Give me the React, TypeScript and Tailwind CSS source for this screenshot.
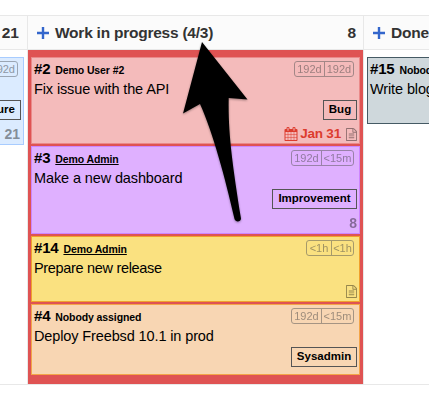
import type { ReactNode } from 'react';

function CalendarIcon() {
  return (
    <svg viewBox="0 0 1792 1792" className="h-[14px] w-[14px] fill-current">
      <path d="M192 1664h288v-288h-288v288zm352 0h320v-288h-320v288zm-352-352h288v-320h-288v320zm352 0h320v-320h-320v320zm-352-384h288v-288h-288v288zm736 736h320v-288h-320v288zm-384-736h320v-288h-320v288zm768 736h288v-288h-288v288zm-384-352h320v-320h-320v320zm-352-864v-288q0-13-9.500-22.500t-22.500-9.500h-64q-13 0-22.500 9.500t-9.500 22.500v288q0 13 9.500 22.500t22.500 9.500h64q13 0 22.500-9.500t9.500-22.500zm736 864h288v-320h-288v320zm-384-384h320v-288h-320v288zm384 0h288v-288h-288v288zm32-480v-288q0-13-9.500-22.500t-22.500-9.500h-64q-13 0-22.500 9.500t-9.500 22.500v288q0 13 9.500 22.500t22.500 9.500h64q13 0 22.500-9.500t9.500-22.500zm384-64v1280q0 52-38 90t-90 38h-1408q-52 0-90-38t-38-90v-1280q0-52 38-90t90-38h128v-96q0-66 47-113t113-47h64q66 0 113 47t47 113v96h384v-96q0-66 47-113t113-47h64q66 0 113 47t47 113v96h128q52 0 90 38t38 90z" />
    </svg>
  );
}

function FileIcon() {
  return (
    <svg viewBox="128 0 1536 1792" className="h-[13px] w-[11px] fill-current opacity-40">
      <path d="M1596 380q28 28 48 76t20 88v1152q0 40-28 68t-68 28h-1344q-40 0-68-28t-28-68v-1600q0-40 28-68t68-28h896q40 0 88 20t76 48zm-444-244v376h376q-10-29-22-41l-313-313q-12-12-41-22zm384 1528v-1024h-416q-40 0-68-28t-28-68v-416h-768v1536h1280zM512 800q0-14 9-23t23-9h704q14 0 23 9t9 23v64q0 14-9 23t-23 9h-704q-14 0-23-9t-9-23v-64zm736 224q14 0 23 9t9 23v64q0 14-9 23t-23 9h-704q-14 0-23-9t-9-23v-64q0-14 9-23t23-9h704zm0 256q14 0 23 9t9 23v64q0 14-9 23t-23 9h-704q-14 0-23-9t-9-23v-64q0-14 9-23t23-9h704z" />
    </svg>
  );
}

function PlusIcon() {
  return (
    <svg viewBox="0 0 12 12" className="h-3 w-3 shrink-0 fill-[#3366cc]">
      <path d="M4.800 0h2.400v4.800H12v2.400H7.200V12H4.800V7.200H0V4.800h4.800z" />
    </svg>
  );
}

type CardProps = {
  id: string;
  who: ReactNode;
  title: ReactNode;
  ages?: [string, string];
  ageWidths?: string;
  category?: string;
  categoryStyle?: string;
  footer?: ReactNode;
  className: string;
};

function Card({ id, who, title, ages, ageWidths, category, categoryStyle, footer, className }: CardProps) {
  return (
    <article className={`flex shrink-0 flex-col border pl-[2px] pr-[2px] text-black ${className}`}>
      <div className="flex h-5 shrink-0 items-start justify-between pr-[3px] pt-[3px]">
        <div className="flex items-baseline gap-[5px] whitespace-nowrap leading-4">
          <span className="text-[15px] font-bold tracking-[-0.2px]">{id}</span>
          <span className="text-[10.500px] font-bold tracking-[-0.1px]">{who}</span>
        </div>
        {ages && (
          <div className={`grid h-4 shrink-0 rounded-[3px] border border-[#555] text-center text-[11px] leading-[15px] text-[#444] opacity-50 ${ageWidths}`}>
            <span className="border-r border-[#555]">{ages[0]}</span>
            <span>{ages[1]}</span>
          </div>
        )}
      </div>
      <div className="h-[22px] shrink-0 whitespace-nowrap text-[14.500px] leading-[22px] tracking-[-0.12px]">{title}</div>
      {category && (
        <div className={`flex h-5 shrink-0 items-center justify-center self-end border border-[#555] text-[11.500px] font-bold ${categoryStyle}`}>
          {category}
        </div>
      )}
      {footer && <div className="mt-auto flex items-center justify-end">{footer}</div>}
    </article>
  );
}

export default function App() {
  return (
    <main className="relative flex h-[407px] w-[429px] flex-col overflow-hidden bg-white pt-[15px] font-['Liberation_Sans',Arial,sans-serif] text-[#333]">
      <div className="grid h-[370px] grid-cols-[28px_336px_65px] grid-rows-[34px_334px] border-y border-[#e8e8e8]">
        <header className="flex items-center justify-end border-b border-r border-[#e8e8e8] bg-[#fbfbfb] pr-2 text-[15.500px] font-bold">21</header>
        <header className="flex items-center border-b border-r border-[#e8e8e8] bg-[#fbfbfb] pl-[9px] pr-[7px] text-[15.500px] font-bold">
          <PlusIcon />
          <span className="ml-[6px] whitespace-nowrap tracking-[-0.24px]">Work in progress (4/3)</span>
          <span className="ml-auto">8</span>
        </header>
        <header className="flex items-center border-b border-[#e8e8e8] bg-[#fbfbfb] pl-[9px] text-[15.500px] font-bold">
          <PlusIcon />
          <span className="ml-[6px] tracking-[-0.24px]">Done</span>
        </header>

        <section className="border-r border-[#e8e8e8] pr-[3px] pt-[7px]">
          <div className="flex h-[88px] w-6 flex-col items-end overflow-hidden border border-l-0 border-[#a8ccff] bg-[#dbebff]">
            <div className="mr-[5px] mt-[3px] flex h-4 w-[31px] shrink-0 items-center justify-end rounded-[3px] border border-[#9aa5b3] pr-[2px] text-[11px] text-[#8d98a5]">192d</div>
            <div className="mr-[2px] mt-[23px] flex h-5 w-[60px] shrink-0 items-center justify-end border border-[#555] pr-[5px] text-[11.500px] font-bold text-black">Feature</div>
            <div className="mr-[3px] mt-[6px] text-[14px] font-bold leading-4 text-[#858e99]">21</div>
          </div>
        </section>

        <section className="flex flex-col gap-[2px] border-r border-r-[#e8e8e8] bg-[#df5353] pl-[3px] pr-[3px] pt-[7px]">
          <Card
            id="#2" who="Demo User #2" title="Fix issue with the API"
            ages={['192d', '192d']} ageWidths="w-[60px] grid-cols-[30px_28px]"
            category="Bug" categoryStyle="w-[34px]"
            className="h-[87px] border-[#ea8a8a] bg-[#f4bbbb]"
            footer={
              <div className="mb-px flex items-center text-[#dc3c2e]">
                <CalendarIcon />
                <span className="ml-[2px] mr-[5px] text-[13.500px] font-bold leading-4 tracking-[-0.2px]">Jan 31</span>
                <span className="text-black"><FileIcon /></span>
              </div>
            }
          />
          <Card
            id="#3" who={<u className="underline-offset-1">Demo Admin</u>} title="Make a new dashboard"
            ages={['192d', '<15m']} ageWidths="w-[63px] grid-cols-[30px_31px]"
            category="Improvement" categoryStyle="w-[85px]"
            className="h-[88px] border-[#cd85fe] bg-[#dfb0ff]"
            footer={<span className="mb-[2px] text-[14px] font-bold leading-4 opacity-40">8</span>}
          />
          <Card
            id="#14" who={<u className="underline-offset-1">Demo Admin</u>} title={<span className="tracking-[-0.32px]">Prepare new release</span>}
            ages={['<1h', '<1h']} ageWidths="w-[48px] grid-cols-[25px_21px]"
            className="h-[66px] border-[#f0a02c] bg-[#fae180]"
            footer={<span className="mb-[3px]"><FileIcon /></span>}
          />
          <Card
            id="#4" who="Nobody assigned" title="Deploy Freebsd 10.1 in prod"
            ages={['192d', '<15m']} ageWidths="w-[63px] grid-cols-[30px_31px]"
            category="Sysadmin" categoryStyle="w-[66px]"
            className="h-[71px] border-[#f3a548] bg-[#f8d6b3]"
          />
        </section>

        <section className="overflow-hidden pl-[3px] pt-[7px]">
          <Card
            id="#15" who="Nobody assigned" title="Write blog post"
            className="h-[67px] w-[80px] border-[#455a64] bg-[#cfd8dc]"
          />
        </section>
      </div>

      <svg viewBox="0 0 429 407" className="pointer-events-none absolute inset-0 h-full w-full drop-shadow-[0_1px_1px_rgba(0,0,0,0.35)]">
        <path d="M202 42L247.500 99.500L228.700 98C228 132 232 162 241 218.500C241 222 235.500 222.500 234.500 219C225 177 213 133 200 104L183 113.500Z" fill="#000" />
      </svg>
    </main>
  );
}
